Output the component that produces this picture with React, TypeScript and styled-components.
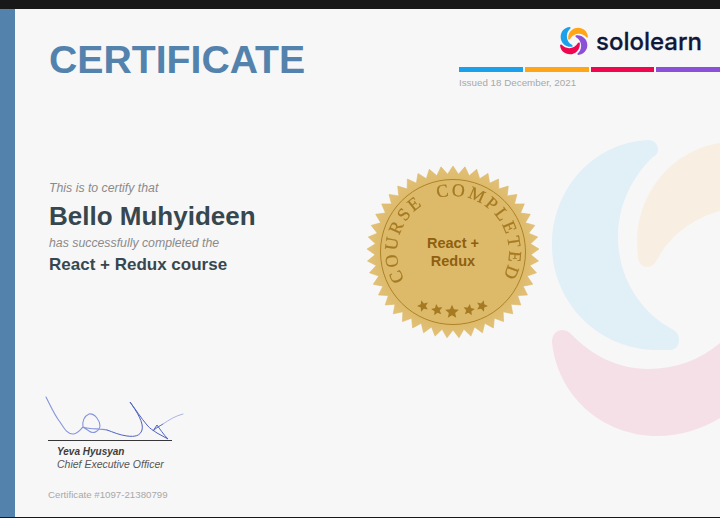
import React from 'react';
import styled, { createGlobalStyle } from 'styled-components';

const GlobalStyle = createGlobalStyle`
  html, body {
    margin: 0;
    padding: 0;
    background: #181818;
  }
  body {
    font-family: "Liberation Sans", Arial, sans-serif;
  }
`;

const Screen = styled.div`
  width: 720px;
  height: 518px;
  padding: 9px 0 1px;
  box-sizing: border-box;
  overflow: hidden;
`;

const Sheet = styled.main`
  position: relative;
  display: flex;
  height: 100%;
  background: #f7f7f7;
`;

const Stripe = styled.div`
  flex: 0 0 15px;
  background: #5382ad;
`;

const Body = styled.div`
  position: relative;
  flex: 1;
  display: flex;
  flex-direction: column;
  padding-left: 34px;
`;

const Header = styled.header`
  display: flex;
  justify-content: space-between;
  height: 155px;
`;

const Title = styled.h1`
  margin: 28px 0 0;
  font-size: 39.2px;
  line-height: 46px;
  font-weight: 700;
  color: #5382ad;
`;

const Brand = styled.div`
  width: 261px;
  display: flex;
  flex-direction: column;
`;

const LogoRow = styled.div`
  display: flex;
  align-items: center;
  gap: 8px;
  height: 40px;
  margin: 12px 0 6px 101px;
`;

const LogoText = styled.span`
  font-family: Inter, sans-serif;
  font-size: 24px;
  font-weight: 500;
  color: #10183a;
  -webkit-text-stroke: 0.3px #10183a;
`;

const ColorBars = styled.div`
  display: flex;
  gap: 2px;
`;

const ColorBar = styled.div<{ $color: string }>`
  flex: 1;
  height: 5px;
  background: ${p => p.$color};
`;

const Issued = styled.div`
  margin-top: 5px;
  font-size: 9.8px;
  line-height: 12px;
  color: #a8a8a8;
`;

const Middle = styled.section`
  display: flex;
  height: 232px;
`;

const Recipient = styled.div`
  width: 317px;
  padding-top: 17px;
`;

const Lead = styled.div`
  font-size: 12.3px;
  line-height: 14px;
  font-style: italic;
  color: #8a8a8a;
`;

const Name = styled.div`
  margin: 6px 0 5px;
  font-size: 26px;
  line-height: 30px;
  font-weight: 700;
  color: #37474f;
`;

const Course = styled.div`
  margin-top: 5px;
  font-size: 17px;
  line-height: 20px;
  font-weight: 700;
  color: #37474f;
`;

const SealBox = styled.div`
  margin-top: 1px;
  width: 174px;
  height: 174px;
`;

const Signature = styled.div`
  margin-left: -4px;
  width: 140px;
  height: 44px;
`;

const Signer = styled.div`
  margin-left: -1px;
  padding-left: 9px;
  width: 115px;
  border-top: 1px solid #37373a;
`;

const SignerName = styled.div`
  margin-top: 5px;
  font-size: 10px;
  line-height: 12px;
  font-weight: 700;
  font-style: italic;
  color: #3c3c3c;
`;

const SignerRole = styled.div`
  font-size: 10.5px;
  line-height: 12px;
  font-style: italic;
  color: #555;
`;

const Serial = styled.div`
  margin-top: 19px;
  margin-left: -1px;
  font-size: 9.7px;
  line-height: 12px;
  color: #a8a8a8;
`;

const Watermark = styled.svg`
  position: absolute;
  right: 0;
  top: 121px;
  width: 168px;
  height: 310px;
`;

const CRESCENT =
  'M648 140 C592 143 552 190 552 245 C552 303 599 350 657 350 L668 350 C675 351 679 346 679 340 C679 335 677 332 672 329 C640 312 618 277 618 237 C618 205 632 177 653 157 C657 155 658 152 658 150 C658 144 654 140 648 140 Z';

function burst(points: number, outer: number, inner: number) {
  const out: string[] = [];
  for (let i = 0; i < points * 2; i++) {
    const r = i % 2 === 0 ? outer : inner;
    const a = (Math.PI * i) / points - Math.PI / 2;
    out.push(`${(87 + r * Math.cos(a)).toFixed(2)},${(87 + r * Math.sin(a)).toFixed(2)}`);
  }
  return out.join(' ');
}

function star(cx: number, cy: number, r: number, rot: number) {
  const out: string[] = [];
  for (let i = 0; i < 10; i++) {
    const rad = i % 2 === 0 ? r : r * 0.46;
    const a = (Math.PI * i) / 5 - Math.PI / 2 + rot;
    out.push(`${(cx + rad * Math.cos(a)).toFixed(2)},${(cy + rad * Math.sin(a)).toFixed(2)}`);
  }
  return out.join(' ');
}

function Seal() {
  return (
    <svg width="174" height="174" viewBox="0 0 174 174">
      <defs>
        <path id="seal-arc" d="M 38.5 115 A 56 56 0 1 1 135.5 115" />
        <radialGradient id="seal-fill">
          <stop offset="0.8" stopColor="#dcb968" />
          <stop offset="1" stopColor="#e2c077" />
        </radialGradient>
        <filter id="seal-soft" x="-5%" y="-5%" width="110%" height="110%">
          <feGaussianBlur stdDeviation="0.35" />
        </filter>
      </defs>
      <polygon
        points={burst(45, 86, 78)}
        fill="url(#seal-fill)"
        stroke="#dcb968"
        strokeWidth="0.6"
        strokeLinejoin="round"
      />
      <circle cx="87" cy="87" r="72.5" fill="#ddba69" stroke="#a97d20" strokeWidth="0.9" />
      <text
        fill="#a67a22"
        stroke="#a67a22"
        strokeWidth="0.25"
        fontFamily="'Liberation Serif', serif"
        fontSize="18"
        letterSpacing="2.6"
        filter="url(#seal-soft)"
      >
        <textPath href="#seal-arc" startOffset="0">
          COURSE&#160;&#160;COMPLETED
        </textPath>
      </text>
      <text
        x="87"
        y="83"
        textAnchor="middle"
        fill="#8f5f10"
        fontFamily="'Liberation Sans', sans-serif"
        fontSize="14.5"
        fontWeight="700"
      >
        React +
      </text>
      <text
        x="87"
        y="101"
        textAnchor="middle"
        fill="#8f5f10"
        fontFamily="'Liberation Sans', sans-serif"
        fontSize="14.5"
        fontWeight="700"
      >
        Redux
      </text>
      <g fill="#a67a22">
        <polygon points={star(57, 141, 6, -0.3)} />
        <polygon points={star(71, 145, 6, -0.15)} />
        <polygon points={star(86, 147, 7.2, 0)} />
        <polygon points={star(103, 145, 6, 0.15)} />
        <polygon points={star(116, 141, 6, 0.3)} />
      </g>
    </svg>
  );
}

function SoloLogo() {
  return (
    <svg width="28" height="28" viewBox="545 139 298 298">
      <path d={CRESCENT} fill="#1ba1ec" />
      <path d={CRESCENT} fill="#ffa516" transform="rotate(90 694 288)" />
      <path d={CRESCENT} fill="#8a50d8" transform="rotate(180 694 288)" />
      <path d={CRESCENT} fill="#f0054f" transform="rotate(-90 694 288)" />
    </svg>
  );
}

function SignatureDrawing() {
  return (
    <svg width="140" height="44" viewBox="0 0 140 44" fill="none" strokeLinecap="round" strokeLinejoin="round">
      <path
        d="M1 1 C6 11 10 20 15 26 C19 32 22 38 28 38 C32 38 34 35 38 31 C37 26 39 20 44 18 C50 17 55 25 55 30 C54 36 48 38 44 35 C41 33 39 32 38 31 C46 34 54 32 62 34"
        stroke="#8494dc"
        strokeWidth="1.1"
      />
      <path
        d="M62 34 C68 36 74 39 82 40 C90 41 95 40 97 34 C99 27 92 16 85 6 C91 14 96 22 102 29 C105 33 108 34 112 37 L123 43 C118 38 115 33 112 29 C111 31 109 33 108 35 C112 31 115 30 118 28"
        stroke="#4f62c0"
        strokeWidth="1"
      />
      <path d="M118 28 C124 24 130 20 138 18" stroke="#a9b4e6" strokeWidth="1" />
    </svg>
  );
}

function App() {
  return (
    <Screen>
      <GlobalStyle />
      <Sheet>
        <Stripe />
        <Watermark viewBox="552 130 168 310" aria-hidden="true">
          <path fill="#e1f0f7" d={CRESCENT} />
          <path
            fill="#f8efe2"
            d="M720 143 C673 150 637 192 637 243 L638 258 C639 263 642 267 647 267 C652 267 655 264 658 258 C670 236 693 218 720 211 Z"
          />
          <path
            fill="#f6e0e8"
            d="M552 342 C557 395 602 436 657 436 C680 436 702 429 720 418 L720 343 C700 360 675 369 648 369 C618 369 591 355 571 334 C568 331 565 330 562 330 C556 330 552 335 552 342 Z"
          />
        </Watermark>
        <Body>
          <Header>
            <Title>CERTIFICATE</Title>
            <Brand>
              <LogoRow>
                <SoloLogo />
                <LogoText>sololearn</LogoText>
              </LogoRow>
              <ColorBars>
                <ColorBar $color="#1ba1ec" />
                <ColorBar $color="#ffa516" />
                <ColorBar $color="#f0054f" />
                <ColorBar $color="#8a50d8" />
              </ColorBars>
              <Issued>Issued 18 December, 2021</Issued>
            </Brand>
          </Header>
          <Middle>
            <Recipient>
              <Lead>This is to certify that</Lead>
              <Name>Bello Muhyideen</Name>
              <Lead>has successfully completed the</Lead>
              <Course>React + Redux course</Course>
            </Recipient>
            <SealBox>
              <Seal />
            </SealBox>
          </Middle>
          <Signature>
            <SignatureDrawing />
          </Signature>
          <Signer>
            <SignerName>Yeva Hyusyan</SignerName>
            <SignerRole>Chief Executive Officer</SignerRole>
          </Signer>
          <Serial>Certificate #1097-21380799</Serial>
        </Body>
      </Sheet>
    </Screen>
  );
}

export default App;
